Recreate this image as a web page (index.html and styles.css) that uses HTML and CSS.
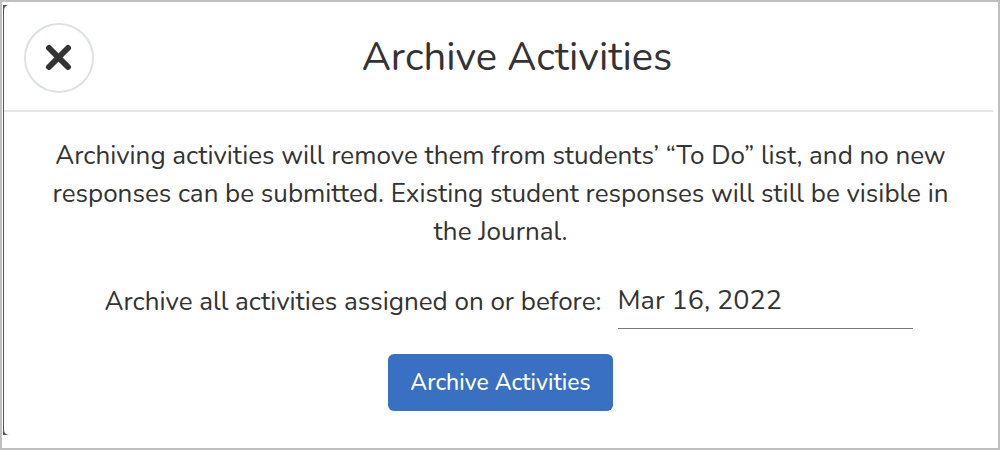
FILE: index.html
```html
<!DOCTYPE html>
<html lang="en">
<head>
    <meta charset="UTF-8" />
    <meta name="viewport" content="width=device-width, initial-scale=1.0" />
    <title>Archive Activities</title>
    <link rel="stylesheet" href="styles.css">
</head>
<body>
    <div class="backdrop">
        <main class="modal">
            <!-- Modal Header -->
            <header class="modal-header">
                <button class="close-btn" type="button" aria-label="Close">
                    <svg class="close-icon" viewBox="0 0 28 28" aria-hidden="true">
                        <path d="M4 4 L23 23 M23 4 L4 23" />
                    </svg>
                </button>
                <h1 class="modal-title">Archive Activities</h1>
            </header>

            <!-- Archive Form -->
            <form class="archive-form">
                <p class="archive-text">Archiving activities will remove them from students’ “To Do” list, and no new responses can be submitted. Existing student responses will still be visible in the Journal.</p>
                <div class="date-row">
                    <label for="archive-date" class="date-label">Archive all activities assigned on or before:</label>
                    <input type="text" name="archive-date" id="archive-date" class="date-input" value="Mar 16, 2022" />
                </div>
                <button class="archive-btn" type="submit">Archive Activities</button>
            </form>
        </main>
    </div>
</body>
</html>
```
FILE: styles.css
```css
*,
*::before,
*::after {
    box-sizing: border-box;
}

body {
    display: flex;
    min-height: 100vh;
    margin: 0;
    padding: 3px 5px 13px 1px;
    border: 2px solid #bfbfbf;
    font-family: Nunito, Lato, sans-serif;
    color: #333;
    background: #fff;
}

button,
input {
    font-family: inherit;
}

/* Modal */
.backdrop {
    display: flex;
    flex: 1;
    padding-left: 1px;
    background: linear-gradient(#555, #555) left / 6px 100% no-repeat;
}

.modal {
    flex: 1;
    border-radius: 5px 0 0 5px;
    background: #fff;
}

.modal-header {
    display: flex;
    align-items: center;
    padding: 18px 53px 17px 20px;
    border-bottom: 2px solid #e6e6e6;
}

.close-btn {
    display: flex;
    align-items: center;
    justify-content: center;
    width: 70px;
    height: 70px;
    padding: 0;
    border: 2px solid #dde1e6;
    border-radius: 50%;
    background: #fff;
}

.close-icon {
    width: 28px;
    height: 28px;
    fill: none;
    stroke: #333;
    stroke-width: 6;
    stroke-linecap: round;
}

.modal-title {
    flex: 1;
    margin: 0;
    padding-bottom: 2px;
    font-size: 40px;
    font-weight: 400;
    line-height: 48px;
    text-align: center;
}

/* Archive Form */
.archive-form {
    display: flex;
    flex-direction: column;
    align-items: center;
    padding: 25px 40px 24px 44px;
    font-size: 26px;
}

.archive-text {
    margin: 0;
    line-height: 38px;
    text-align: center;
}

.date-row {
    display: flex;
    align-items: center;
    gap: 16px;
    width: 824px;
    max-width: 100%;
    margin: 22px 0 25px;
    padding-left: 16px;
}

.date-label {
    white-space: nowrap;
}

.date-input {
    flex: 1;
    min-width: 0;
    height: 56px;
    padding: 0;
    border: none;
    border-bottom: 1px solid #777;
    font-size: 27px;
    color: #333;
    background: none;
}

.archive-btn {
    height: 57px;
    padding: 0 22px;
    border: none;
    border-radius: 6px;
    font-size: 23px;
    font-weight: 500;
    color: #fff;
    background: #3970c1;
}
```
